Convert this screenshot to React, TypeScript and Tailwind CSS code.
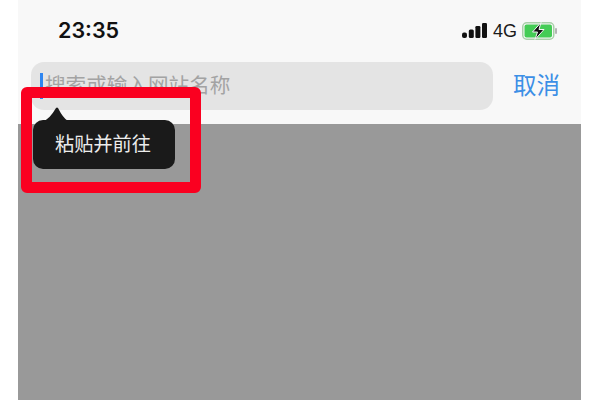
import "react";

const cjk = "font-['Liberation_Sans','Noto_Sans_CJK_SC',sans-serif]";

function SignalBars() {
  return (
    <svg className="mr-[1px]" width="25" height="15" viewBox="0 0 25 15" fill="#111">
      <rect x="0" y="9.5" width="5" height="5.5" rx="2" />
      <rect x="6.8" y="6.5" width="5" height="8.5" rx="1.5" />
      <rect x="13.4" y="3" width="5" height="12" rx="1.2" />
      <rect x="20" y="0" width="5" height="15" rx="1.2" />
    </svg>
  );
}

function Battery() {
  return (
    <svg width="36" height="18" viewBox="0 0 36 18">
      <rect x="0.75" y="0.75" width="31" height="16.5" rx="4" fill="none" stroke="#a8cfa8" strokeWidth="1.5" />
      <rect x="2.5" y="2.5" width="27.5" height="13" rx="2" fill="#44cc55" />
      <rect x="33" y="6" width="2" height="6" rx="1" fill="#b5b5b5" />
      <path d="M19 0.5 L10.5 10 H15.5 L13 17.5 L22 7.5 H17 Z" fill="#111" stroke="#f7f7f7" strokeWidth="1" />
    </svg>
  );
}

export default function App() {
  return (
    <div className={`relative w-[600px] h-[400px] overflow-hidden bg-white px-[18px] ${cjk}`}>
      <div className="w-[563px] h-full flex flex-col bg-[#999999]">
        {/* Status bar + search header */}
        <div className="h-[124px] shrink-0 bg-[#f8f8f8] flex flex-col">
          <div className="h-[62px] flex items-center justify-between pl-[40px] pr-[23px] pb-[1px]">
            <span className="font-['Inter'] text-[21.5px] font-semibold text-[#111111]">23:35</span>
            <div className="flex items-center gap-[5px]">
              <SignalBars />
              <span className="text-[18px] leading-none text-[#1a1a1a]">4G</span>
              <Battery />
            </div>
          </div>
          <div className="flex items-start pl-[13px]">
            <div className="w-[462px] h-[48px] rounded-[13px] bg-[#e4e4e4] flex items-center pl-[9px]">
              <div className="w-[3px] h-[26px] bg-[#2f86f0]" />
              <span className="ml-[2px] pt-[1px] text-[20.6px] text-[#a3a3a3]">搜索或输入网站名称</span>
            </div>
            <button className="ml-[20px] h-[48px] pt-[2px] text-[23.5px] text-[#3c8fe6]">取消</button>
          </div>
        </div>
      </div>

      {/* Tooltip over the search bar */}
      <div className="absolute left-[33px] top-[120px] w-[142px] h-[49px] rounded-[10px] bg-[#1a1a1a] flex items-center justify-center pr-[2px] pt-[2px] text-[19.2px] text-[#ececec]">
        粘贴并前往
      </div>
      <svg className="absolute left-[41px] top-[107px]" width="28" height="14" viewBox="0 0 28 14">
        <path d="M2 14 Q8 13 15 1 Q16 0 17 1 Q22 11 27 14 Z" fill="#1a1a1a" />
      </svg>

      {/* Red annotation box */}
      <div className="absolute left-[21px] top-[87px] w-[180px] h-[106px] rounded-[6px] border-[11.5px] border-[#fa0020]" />
    </div>
  );
}
